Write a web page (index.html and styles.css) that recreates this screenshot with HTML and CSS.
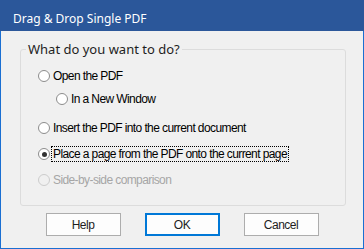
FILE: index.html
```html
<!DOCTYPE html>
<html lang="en-US">
    <head>
        <meta charset="UTF-8">
        <title>Drag &amp; Drop Single PDF</title>
<link rel="stylesheet" href="styles.css">
    </head>
    <body>
        <div class="window">
            <div class="titlebar">Drag &amp; Drop Single PDF</div>
            <div class="content">
                <fieldset class="group">
                    <legend>What do you want to do?</legend>
                    <div class="option first">
                        <span class="radio"></span>
                        <span class="label">Open the PDF</span>
                    </div>
                    <div class="option sub">
                        <span class="radio"></span>
                        <span class="label">In a New Window</span>
                    </div>
                    <div class="option spaced">
                        <span class="radio"></span>
                        <span class="label">Insert the PDF into the current document</span>
                    </div>
                    <div class="option next checked">
                        <span class="radio"></span>
                        <span class="label focus">Place a page from the PDF onto the current page</span>
                    </div>
                    <div class="option next disabled">
                        <span class="radio"></span>
                        <span class="label">Side-by-side comparison</span>
                    </div>
                </fieldset>
                <div class="buttons">
                    <button class="btn">Help</button>
                    <button class="btn default">OK</button>
                    <button class="btn">Cancel</button>
                </div>
            </div>
        </div>
    </body>
</html>
```

FILE: styles.css
```css
html,body {
    margin: 0;
    font-family: "Liberation Sans", sans-serif;
    font-size: 12px;
    color: #000;
}
.window {
    width: 364px;
    height: 249px;
    box-sizing: border-box;
    background-color: #F0F0F0;
    border: 1px solid #1A6FD2;
    border-top: 0;
}
.titlebar {
    height: 31px;
    box-sizing: border-box;
    margin: 0 -1px;
    padding: 11px 0 0 13px;
    font-family: "Noto Sans", sans-serif;
    line-height: 16px;
    background-color: #2B579A;
    color: #fff;
}
.group {
    margin: 10px 17px 0 19px;
    padding: 0 0 17px;
    border: 1px solid #DCDCDC;
    border-radius: 3px;
    line-height: 16px;
}
.group legend {
    margin-left: 5px;
    padding: 0 2px;
    font-family: "Noto Sans", sans-serif;
    font-size: 13px;
    color: #1E1E1E;
}
.option {
    display: flex;
    align-items: center;
    height: 16px;
    padding-left: 17px;
}
.option.first { margin-top: 11px; }
.option.sub { margin-top: 7px; padding-left: 35px; }
.option.spaced { margin-top: 13px; }
.option.next { margin-top: 10px; }
.radio {
    width: 12px;
    height: 12px;
    box-sizing: border-box;
    border: 1px solid #8C8C8C;
    border-radius: 50%;
    background-color: #fff;
    margin-right: 1px;
    display: flex;
    align-items: center;
    justify-content: center;
}
.checked .radio::after {
    content: "";
    width: 5px;
    height: 5px;
    border-radius: 50%;
    background-color: #333;
}
.label {
    border: 1px dotted transparent;
    padding: 0 1px;
    line-height: 14px;
    letter-spacing: -0.6px;
    white-space: nowrap;
}
.label.focus {
    border-color: #000;
}
.disabled .radio {
    border-color: #CCCCCC;
    background-color: #F0F0F0;
}
.disabled .label {
    color: #A6A6A6;
}
.buttons {
    display: flex;
    justify-content: center;
    gap: 24px;
    margin-top: 7px;
}
.btn {
    width: 75px;
    height: 23px;
    box-sizing: border-box;
    border: 1px solid #ADADAD;
    background-color: #FDFDFD;
    font-family: inherit;
    font-size: 12px;
    letter-spacing: -0.5px;
    color: #1E1E1E;
    padding: 0;
}
.btn.default {
    border: 2px solid #0078D7;
}
```
